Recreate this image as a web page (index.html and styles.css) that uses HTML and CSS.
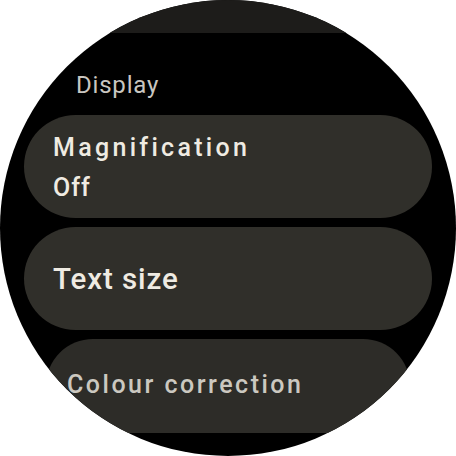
FILE: index.html
```html
<!DOCTYPE html>
<html>
<head>
<meta charset="utf-8">
<link rel="stylesheet" href="styles.css">
</head>
<body>
<div class="watch">
  <div class="list">
    <div class="prev-chip"></div>
    <div class="section-label">Display</div>
    <div class="chip chip-two">
      <div class="chip-title">Magnification</div>
      <div class="chip-sub">Off</div>
    </div>
    <div class="chip chip-one">
      <div class="chip-title big">Text size</div>
    </div>
    <div class="chip chip-far">
      <div class="chip-title dim">Colour correction</div>
    </div>
  </div>
</div>
</body>
</html>
```

FILE: styles.css
```css
html, body {
  margin: 0;
  padding: 0;
  background: #ffffff;
}

body {
  width: 456px;
  height: 456px;
  overflow: hidden;
  font-family: Roboto, "Noto Sans", sans-serif;
}

.watch {
  width: 456px;
  height: 456px;
  border-radius: 50%;
  background: #000000;
  overflow: hidden;
}

.list {
  display: flex;
  flex-direction: column;
}

.prev-chip {
  height: 33px;
  margin: 0 24px;
  background: #1d1c1a;
  border-radius: 0 0 52px 52px;
}

.section-label {
  padding: 38px 0 16px 76px;
  font-size: 24px;
  line-height: 28px;
  letter-spacing: 0.8px;
  color: #c9c6c0;
}

.chip {
  box-sizing: border-box;
  background: #302f2a;
  border-radius: 52px;
  margin: 0 24px 9px;
  padding-left: 29px;
}

.chip-two {
  height: 103px;
  padding-top: 18px;
}

.chip-one {
  height: 103px;
  padding-top: 35px;
}

.chip-far {
  height: 94px;
  margin: 0 46px;
  padding-left: 21px;
  padding-top: 31px;
  background: #2d2c28;
  border-radius: 47px;
}

.chip-title {
  font-size: 25px;
  line-height: 30px;
  letter-spacing: 3.3px;
  font-weight: 500;
  color: #efebe2;
  white-space: nowrap;
}

.chip-title.big {
  font-size: 29.5px;
  line-height: 34px;
  letter-spacing: 0.9px;
}

.chip-title.dim {
  letter-spacing: 2.5px;
  color: #cbc8c0;
}

.chip-sub {
  margin-top: 11px;
  font-size: 25px;
  line-height: 28px;
  letter-spacing: 1px;
  font-weight: 500;
  color: #efebe2;
}
```
